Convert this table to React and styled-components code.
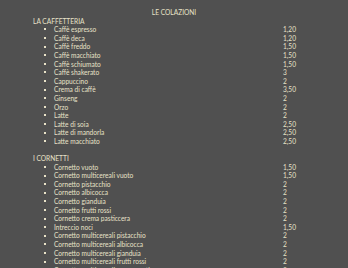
import React from 'react'
import styled, { createGlobalStyle } from 'styled-components'

const GlobalStyle = createGlobalStyle`
  html, body {
    margin: 0;
    padding: 0;
    background: #505050;
  }
  body {
    font-family: Lato, "Open Sans", sans-serif;
  }
`

const sections = [
  {
    title: 'LA CAFFETTERIA',
    items: [
      ['Caffè espresso', '1,20'],
      ['Caffè deca', '1,20'],
      ['Caffè freddo', '1,50'],
      ['Caffè macchiato', '1,50'],
      ['Caffè schiumato', '1,50'],
      ['Caffè shakerato', '3'],
      ['Cappuccino', '2'],
      ['Crema di caffè', '3,50'],
      ['Ginseng', '2'],
      ['Orzo', '2'],
      ['Latte', '2'],
      ['Latte di soia', '2,50'],
      ['Latte di mandorla', '2,50'],
      ['Latte macchiato', '2,50'],
    ],
  },
  {
    title: 'I CORNETTI',
    items: [
      ['Cornetto vuoto', '1,50'],
      ['Cornetto multicereali vuoto', '1,50'],
      ['Cornetto pistacchio', '2'],
      ['Cornetto albicocca', '2'],
      ['Cornetto gianduia', '2'],
      ['Cornetto frutti rossi', '2'],
      ['Cornetto crema pasticcera', '2'],
      ['Intreccio noci', '1,50'],
      ['Cornetto multicereali pistacchio', '2'],
      ['Cornetto multicereali albicocca', '2'],
      ['Cornetto multicereali gianduia', '2'],
      ['Cornetto multicereali frutti rossi', '2'],
      ['Cornetto multicereali crema pasticcera', '2'],
    ],
  },
]

const App = () => (
  <Page>
    <GlobalStyle />
    <Title>LE COLAZIONI</Title>
    {sections.map((section) => (
      <Section key={section.title}>
        <Heading>{section.title}</Heading>
        {section.items.map(([name, price]) => (
          <Row key={name}>
            <BulletCell>
              <Bullet />
            </BulletCell>
            <Name>{name}</Name>
            <Price>{price}</Price>
          </Row>
        ))}
      </Section>
    ))}
  </Page>
)

export default App

const Page = styled.div`
  width: 348px;
  height: 268px;
  overflow: hidden;
  box-sizing: border-box;
  padding-top: 8px;
  color: #e8e2c8;
  font-size: 6.6px;
  line-height: 8.6px;
  display: flex;
  flex-direction: column;
  gap: 8.6px;
`

const Title = styled.div`
  text-align: center;
  height: 8.6px;
  margin-bottom: -8.6px;
`

const Section = styled.div`
  display: flex;
  flex-direction: column;
`

const Heading = styled.div`
  padding-left: 33px;
  height: 8.6px;
`

const Row = styled.div`
  display: grid;
  grid-template-columns: 54px 229px 1fr;
  height: 8.6px;
  align-items: center;
`

const BulletCell = styled.div`
  display: flex;
  justify-content: flex-start;
  padding-left: 44px;
`

const Bullet = styled.span`
  width: 2px;
  height: 2px;
  background: #e8e2c8;
`

const Name = styled.span`
  white-space: nowrap;
`

const Price = styled.span`
  white-space: nowrap;
`
